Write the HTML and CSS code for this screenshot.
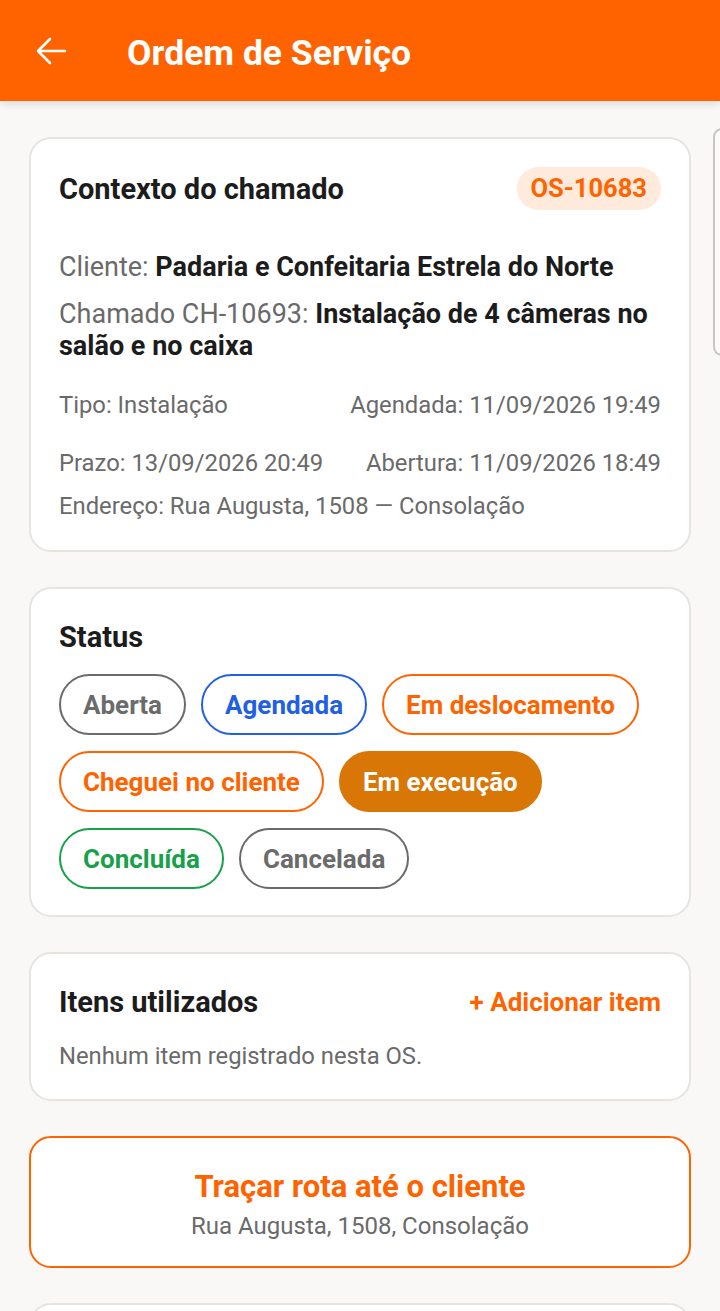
FILE: index.html
```html
<!DOCTYPE html>
<html lang="pt-BR">
<head>
    <meta charset="UTF-8">
    <meta name="viewport" content="width=device-width, initial-scale=1.0">
    <title>Ordem de Serviço</title>
    <link rel="stylesheet" href="styles.css">
</head>
<body>

    <header class="topbar">
        <span class="back">
            <svg width="32" height="32" viewBox="0 0 32 32">
                <path d="M3 16H30M15 4L3 16L15 28" fill="none" stroke="#fff" stroke-width="2.6" stroke-linecap="round" stroke-linejoin="round"/>
            </svg>
        </span>
        <h1>Ordem de Serviço</h1>
    </header>

    <div class="pager">
        <main class="page">

            <section class="card context">
                <div class="card-head">
                    <h2>Contexto do chamado</h2>
                    <span class="badge">OS-10683</span>
                </div>
                <p class="line first"><span class="lbl">Cliente:</span> <b>Padaria e Confeitaria Estrela do Norte</b></p>
                <p class="line"><span class="lbl">Chamado CH-10693:</span> <b>Instalação de 4 câmeras no salão e no caixa</b></p>
                <div class="meta-row">
                    <span>Tipo: Instalação</span>
                    <span>Agendada: 11/09/2026 19:49</span>
                </div>
                <div class="meta-row">
                    <span>Prazo: 13/09/2026 20:49</span>
                    <span>Abertura: 11/09/2026 18:49</span>
                </div>
                <p class="meta">Endereço: Rua Augusta, 1508 — Consolação</p>
            </section>

            <section class="card">
                <h2>Status</h2>
                <div class="chips">
                    <span class="chip gray">Aberta</span>
                    <span class="chip blue">Agendada</span>
                    <span class="chip orange">Em deslocamento</span>
                    <span class="chip orange">Cheguei no cliente</span>
                    <span class="chip active">Em execução</span>
                    <span class="chip green">Concluída</span>
                    <span class="chip gray">Cancelada</span>
                </div>
            </section>

            <section class="card items">
                <div class="card-head">
                    <h2>Itens utilizados</h2>
                    <span class="add">+ Adicionar item</span>
                </div>
                <p class="meta empty">Nenhum item registrado nesta OS.</p>
            </section>

            <button class="route" type="button">
                <span class="route-title">Traçar rota até o cliente</span>
                <span class="route-sub">Rua Augusta, 1508, Consolação</span>
            </button>

            <section class="card next"></section>

        </main>
        <div class="peek"></div>
    </div>

</body>
</html>
```

FILE: styles.css
```css
body {
    margin: 0;
    font-family: Roboto, "Liberation Sans", sans-serif;
    background-color: #f9f8f6;
    color: #1c1c1c;
    overflow: hidden;
}

.topbar {
    height: 101px;
    background-color: #ff6300;
    display: flex;
    align-items: center;
    padding: 4px 0 0 35px;
    box-shadow: 0 3px 8px rgba(0, 0, 0, 0.12);
    position: relative;
    box-sizing: border-box;
}

.back {
    display: flex;
    width: 32px;
    height: 32px;
    margin-top: -4px;
}

.topbar h1 {
    margin: 0 0 0 60px;
    color: white;
    font-size: 35.5px;
    font-weight: 700;
    line-height: 40px;
}

.pager {
    display: flex;
}

.page {
    flex: 0 0 720px;
    box-sizing: border-box;
    padding: 36px 29px 0;
}

.peek {
    flex: 0 0 60px;
    margin-left: -7px;
    margin-top: 27px;
    height: 228px;
    border: 2px solid #c9c6c2;
    border-right: none;
    border-radius: 9px 0 0 9px;
    background-color: #fbfaf8;
    box-sizing: border-box;
}

.card {
    background-color: white;
    border: 2px solid #e7e4e0;
    border-radius: 22px;
    padding: 28px 28px 26px;
    margin-bottom: 35px;
}

.card.context {
    padding-bottom: 29px;
}

.card.items {
    padding-bottom: 28px;
}

.card h2 {
    margin: 0;
    font-size: 29px;
    font-weight: 700;
    line-height: 40px;
    color: #1c1c1c;
}

.card-head {
    display: flex;
    justify-content: space-between;
    align-items: center;
}

.badge {
    background-color: #ffeadb;
    color: #ff6300;
    font-size: 25.5px;
    font-weight: 700;
    padding: 6px 14px 7px;
    border-radius: 22px;
    line-height: 30px;
}

.line {
    margin: 0;
    font-size: 27px;
    line-height: 32px;
}

.line.first {
    margin-top: 41px;
    margin-bottom: 15px;
}

.line b {
    font-weight: 700;
    color: #1c1c1c;
}

.lbl {
    color: #6a6a6a;
}

.meta-row {
    display: flex;
    justify-content: space-between;
    font-size: 23.8px;
    color: #6a6a6a;
    line-height: 30px;
    margin-top: 28px;
}

.meta {
    margin: 13px 0 0;
    font-size: 23.8px;
    color: #6a6a6a;
    line-height: 30px;
}

.chips {
    display: flex;
    flex-wrap: wrap;
    gap: 16px 15px;
    margin-top: 17px;
}

.chip {
    border: 2px solid;
    border-radius: 32px;
    padding: 0 22px;
    height: 61px;
    box-sizing: border-box;
    display: flex;
    align-items: center;
    font-size: 26px;
    font-weight: 700;
}

.chip.gray {
    border-color: #6b6b6b;
    color: #6b6b6b;
}

.chip.blue {
    border-color: #2160e5;
    color: #2160e5;
}

.chip.orange {
    border-color: #ff6300;
    color: #ff6300;
}

.chip.green {
    border-color: #18a04a;
    color: #18a04a;
}

.chip.active {
    background-color: #d97706;
    border-color: #d97706;
    color: white;
}

.add {
    color: #ff6300;
    font-size: 26px;
    font-weight: 700;
}

.meta.empty {
    margin-top: 19px;
}

.route {
    display: flex;
    flex-direction: column;
    align-items: center;
    width: 100%;
    background-color: white;
    border: 2px solid #ff6300;
    border-radius: 22px;
    padding: 31px 0 25px;
    margin-bottom: 35px;
    font-family: inherit;
    cursor: pointer;
}

.route-title {
    color: #ff6300;
    font-size: 31px;
    font-weight: 700;
    line-height: 36px;
}

.route-sub {
    color: #6a6a6a;
    font-size: 24px;
    line-height: 30px;
    margin-top: 6px;
}

.card.next {
    height: 200px;
    padding: 0;
}
```
